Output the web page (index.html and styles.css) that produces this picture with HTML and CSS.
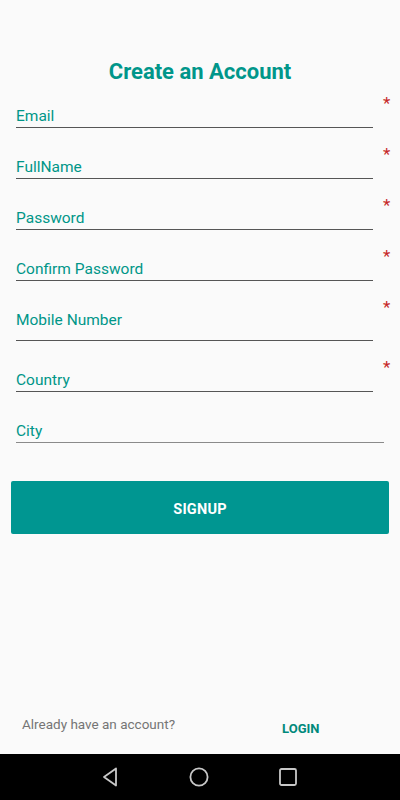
FILE: index.html
```html
<!DOCTYPE html>
<html lang="en">
<head>
<meta charset="utf-8">
<title>Create an Account</title>
<link rel="stylesheet" href="styles.css">
</head>
<body>
<div class="screen">
  <main class="content">
    <h1 class="title">Create an Account</h1>
    <form class="form">
      <div class="row">
        <div class="field"><span class="label">Email</span></div>
        <span class="req">*</span>
      </div>
      <div class="row">
        <div class="field"><span class="label">FullName</span></div>
        <span class="req">*</span>
      </div>
      <div class="row">
        <div class="field"><span class="label">Password</span></div>
        <span class="req">*</span>
      </div>
      <div class="row">
        <div class="field"><span class="label">Confirm Password</span></div>
        <span class="req">*</span>
      </div>
      <div class="row">
        <div class="field field-tall"><span class="label">Mobile Number</span></div>
        <span class="req">*</span>
      </div>
      <div class="row">
        <div class="field"><span class="label">Country</span></div>
        <span class="req">*</span>
      </div>
      <div class="row">
        <div class="field field-wide"><span class="label">City</span></div>
      </div>
      <button type="button" class="signup">SIGNUP</button>
    </form>
    <div class="footer">
      <span class="already">Already have an account?</span>
      <span class="login">LOGIN</span>
    </div>
  </main>
  <nav class="navbar">
    <svg class="nav-icon" width="20" height="22" viewBox="0 0 20 22"><path d="M15 2.5 L3 11 L15 19.5 Z" fill="none" stroke="#c8c8c8" stroke-width="1.8" stroke-linejoin="round"/></svg>
    <svg class="nav-icon" width="22" height="22" viewBox="0 0 22 22"><circle cx="11" cy="11" r="8.6" fill="none" stroke="#c8c8c8" stroke-width="1.8"/></svg>
    <svg class="nav-icon" width="22" height="22" viewBox="0 0 22 22"><rect x="3" y="3" width="16" height="16" rx="1.5" fill="none" stroke="#c8c8c8" stroke-width="1.8"/></svg>
  </nav>
</div>
</body>
</html>
```

FILE: styles.css
```css
* { box-sizing: border-box; }
html, body { margin: 0; padding: 0; }
body {
  background: #fafafa;
  font-family: Roboto, "Noto Sans", sans-serif;
}
.screen {
  width: 400px;
  height: 800px;
  display: flex;
  flex-direction: column;
}
.content {
  flex: 1;
  display: flex;
  flex-direction: column;
}
.title {
  margin: 59px 0 0;
  font-size: 22px;
  line-height: 26px;
  font-weight: 700;
  color: #00968a;
  text-align: center;
}
.form {
  display: flex;
  flex-direction: column;
  padding-top: 21px;
}
.row {
  display: flex;
  align-items: flex-start;
  padding-left: 16px;
  margin-bottom: 29px;
}
.row:last-of-type { margin-bottom: 0; }
.field {
  width: 357px;
  border-bottom: 1px solid #555;
  padding-bottom: 1px;
}
.field-tall { padding-bottom: 10px; }
.field-wide { width: 368px; border-bottom-color: #8a8a8a; }
.label {
  display: block;
  font-size: 15.5px;
  line-height: 20px;
  color: #009688;
}
.req {
  margin-left: 10px;
  margin-top: -11px;
  font-size: 17px;
  line-height: 16px;
  color: #c62828;
}
.signup {
  margin: 38px 11px 0;
  height: 53px;
  border: none;
  border-radius: 2px;
  background: #009691;
  color: #fff;
  font-family: Roboto, sans-serif;
  font-size: 14.5px;
  font-weight: 700;
  letter-spacing: 0.2px;
  padding: 3px 0 0;
}
.footer {
  margin-top: auto;
  display: flex;
  align-items: baseline;
  padding: 0 0 16px 22px;
}
.already {
  font-size: 13.5px;
  line-height: 18px;
  color: #757575;
  position: relative;
  top: -4px;
}
.login {
  margin-left: 107px;
  font-size: 13px;
  font-weight: 700;
  line-height: 18px;
  color: #00897b;
}
.navbar {
  height: 46px;
  background: #000;
  display: flex;
  align-items: center;
  justify-content: center;
  gap: 67px;
}
.nav-icon { display: block; }
```
